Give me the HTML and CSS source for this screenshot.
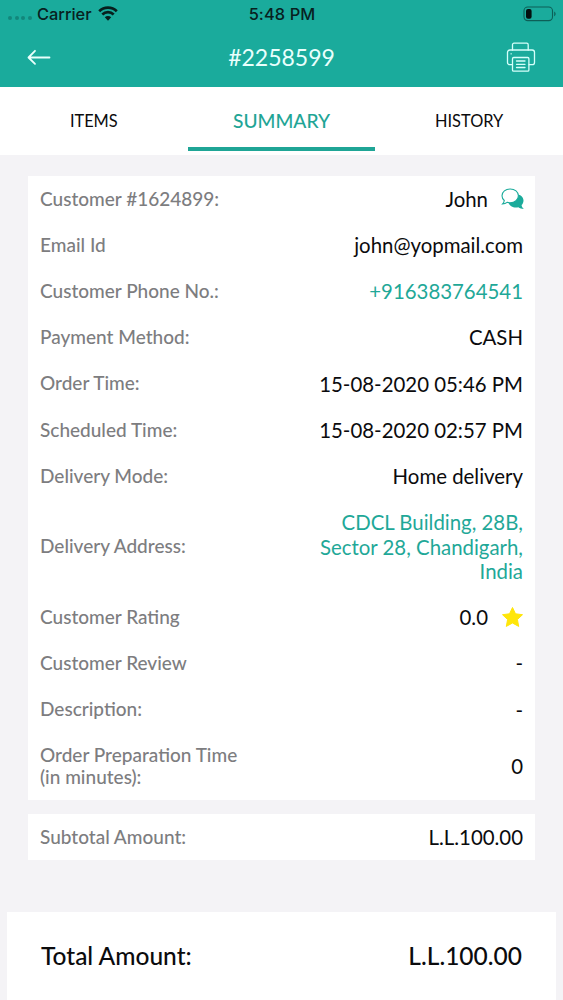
FILE: index.html
```html
<!DOCTYPE html>
<html lang="en">
<head>
    <meta charset="UTF-8">
    <meta name="viewport" content="width=device-width, initial-scale=1.0">
    <title>Order #2258599</title>
    <link rel="stylesheet" href="styles.css">
</head>
<body>
    <header class="header">
        <div class="status-bar">
            <div class="carrier">
                <span class="signal"><i></i><i></i><i></i><i></i></span>
                <span class="carrier-name">Carrier</span>
                <svg class="wifi" width="20" height="15" viewBox="0 0 20 15">
                    <path d="M1.2 5.2a12.6 12.6 0 0 1 17.6 0M4.3 8.5a8.2 8.2 0 0 1 11.4 0" fill="none" stroke="#071f1d" stroke-width="2.7"/>
                    <path d="M10 14.7l-3.2-3.4a4.6 4.6 0 0 1 6.4 0z" fill="#071f1d"/>
                </svg>
            </div>
            <div class="time">5:48 PM</div>
            <svg class="battery" width="34" height="16" viewBox="0 0 34 16">
                <rect x="1" y="1" width="28.5" height="13.6" rx="3.8" fill="none" stroke="#0d5f57" stroke-width="1.1"/>
                <rect x="3" y="2.9" width="5.6" height="9.9" rx="2" fill="#04100f"/>
                <path d="M31.2 5.4v4.8c1.9-.7 1.9-4.1 0-4.8z" fill="#0d5f57"/>
            </svg>
        </div>
        <div class="nav-bar">
            <svg class="back" width="30" height="18" viewBox="0 0 30 18">
                <path d="M22.5 9.5H1.8M8 2.8L1.5 9.5 8 15.900" fill="none" stroke="#e9fffc" stroke-width="1.8" stroke-linecap="round" stroke-linejoin="round"/>
            </svg>
            <h1 class="title">#2258599</h1>
            <svg class="printer" width="30" height="31" viewBox="0 0 30 31" fill="none" stroke="#d5fffa" stroke-width="1.3" stroke-linejoin="round" stroke-linecap="round">
                <path d="M6.5 8V2.7a1.500 1.500 0 0 1 1.500-1.500h12.700a1.500 1.500 0 0 1 1.500 1.500V8"/>
                <path d="M6 22.700H3.800a2.300 2.300 0 0 1-2.300-2.300V10.300A2.300 2.300 0 0 1 3.800 8h22.400a2.300 2.300 0 0 1 2.300 2.300v10.100a2.300 2.300 0 0 1-2.300 2.300H23"/>
                <rect x="6.5" y="15.5" width="16.4" height="13.7" rx="1.2"/>
                <path d="M10.500 19h8.500M10.500 22.300h8.500M10.500 25.500h8.500M5 11.800h.3"/>
            </svg>
        </div>
    </header>

    <nav class="tabs">
        <a class="tab">ITEMS</a>
        <a class="tab active">SUMMARY</a>
        <a class="tab">HISTORY</a>
    </nav>

    <main class="content">
        <section class="card">
            <div class="row">
                <span class="label">Customer #1624899:</span>
                <span class="value">John
                    <svg class="icon" width="23" height="22" viewBox="0 0 23 22">
                        <path d="M12 6.2h3c4.2 0 7.5 2.7 7.5 6.2 0 1.9-.7 3.4-1.9 4.6.2 1.7.9 2.800 2.200 4-2 0-4-.5-5.500-1.700-4.300 1-8.800-.8-9.700-4.500z" fill="#1bab9b"/>
                        <path d="M9.200 1c4.600 0 8.200 2.900 8.200 6.800s-3.600 7-8.200 7c-1.100 0-2.100-.2-3.100-.5-1.200 1-2.700 1.600-4.500 1.600 1-.9 1.500-2 1.700-3.400C1.800 11.300 1 9.700 1 7.800 1 3.900 4.600 1 9.200 1z" fill="#fff" stroke="#1bab9b" stroke-width="1.1"/>
                    </svg>
                </span>
            </div>
            <div class="row">
                <span class="label">Email Id</span>
                <span class="value">john@yopmail.com</span>
            </div>
            <div class="row">
                <span class="label">Customer Phone No.:</span>
                <span class="value link">+916383764541</span>
            </div>
            <div class="row">
                <span class="label">Payment Method:</span>
                <span class="value">CASH</span>
            </div>
            <div class="row">
                <span class="label">Order Time:</span>
                <span class="value">15-08-2020 05:46 PM</span>
            </div>
            <div class="row">
                <span class="label">Scheduled Time:</span>
                <span class="value">15-08-2020 02:57 PM</span>
            </div>
            <div class="row">
                <span class="label">Delivery Mode:</span>
                <span class="value">Home delivery</span>
            </div>
            <div class="row">
                <span class="label">Delivery Address:</span>
                <span class="value link">CDCL Building, 28B,<br>Sector 28, Chandigarh,<br>India</span>
            </div>
            <div class="row">
                <span class="label">Customer Rating</span>
                <span class="value">0.0
                    <svg class="icon" width="23" height="22" viewBox="0 0 23 22">
                        <path d="M11.5 1.5l3 6.3 7 .9-5.1 4.8 1.3 6.9-6.2-3.4-6.2 3.4 1.3-6.9L1.5 8.7l7-.9z" fill="#ffe60a" stroke="#ffe60a" stroke-linejoin="round"/>
                    </svg>
                </span>
            </div>
            <div class="row">
                <span class="label">Customer Review</span>
                <span class="value">-</span>
            </div>
            <div class="row">
                <span class="label">Description:</span>
                <span class="value">-</span>
            </div>
            <div class="row">
                <span class="label">Order Preparation Time<br>(in minutes):</span>
                <span class="value">0</span>
            </div>
        </section>

        <section class="card">
            <div class="row">
                <span class="label">Subtotal Amount:</span>
                <span class="value">L.L.100.00</span>
            </div>
        </section>
    </main>

    <footer class="total">
        <span>Total Amount:</span>
        <span>L.L.100.00</span>
    </footer>
</body>
</html>
```
FILE: styles.css
```css
* {
    box-sizing: border-box;
}

body {
    font-family: Lato, sans-serif;
    margin: 0;
    height: 1000px;
    display: flex;
    flex-direction: column;
    background-color: #f4f3f6;
    color: #0b0b0d;
    overflow: hidden;
}

.header {
    height: 87px;
    background-color: #1aab9c;
}

.status-bar {
    display: grid;
    grid-template-columns: 1fr auto 1fr;
    align-items: center;
    height: 27px;
    padding: 0 7px 0 8px;
    font-family: Inter, sans-serif;
    font-size: 16.4px;
    font-weight: 500;
    color: #08211f;
}

.carrier {
    display: flex;
    align-items: center;
}

.signal {
    display: flex;
    gap: 2.5px;
    margin: 9px 5.5px 0 0;
}

.signal i {
    width: 4px;
    height: 4px;
    border-radius: 50%;
    background-color: #12877b;
}

.wifi {
    margin-left: 6px;
}

.time {
    letter-spacing: 0.1px;
}

.battery {
    justify-self: end;
    margin-right: -1px;
}

.nav-bar {
    display: flex;
    align-items: center;
    justify-content: space-between;
    height: 60px;
    padding: 0 27px;
}

.title {
    margin: 0;
    font-size: 23px;
    font-weight: 400;
    color: #e9fffc;
}

.tabs {
    display: grid;
    grid-template-columns: repeat(3, 1fr);
    height: 68px;
    padding-bottom: 4px;
    background-color: #fff;
}

.tab {
    display: flex;
    align-items: center;
    justify-content: center;
    padding-top: 6px;
    border-bottom: 4px solid transparent;
    font-size: 16.4px;
}

.tab.active {
    border-color: #1fa596;
    font-size: 19.2px;
    font-weight: 500;
    color: #1fa596;
}

.content {
    flex: 1;
    display: flex;
    flex-direction: column;
    gap: 14px;
    padding: 21px 28px 0;
}

.card {
    background-color: #fff;
}

.row {
    display: flex;
    align-items: center;
    justify-content: space-between;
    padding: 10.9px 12px;
    min-height: 46.2px;
}

.label {
    font-size: 19px;
    font-weight: 500;
    line-height: 22.7px;
    color: #7d7d7f;
}

.value {
    display: flex;
    align-items: center;
    font-size: 20.4px;
    line-height: 24.4px;
    text-align: right;
}

.link {
    color: #1fa898;
}

.icon {
    margin: 0 -1px 0 13px;
}

.total {
    display: flex;
    align-items: center;
    justify-content: space-between;
    height: 88px;
    margin: 0 7px;
    padding: 0 34px 1px;
    background-color: #fff;
    font-size: 24.5px;
    font-weight: 500;
}
```
